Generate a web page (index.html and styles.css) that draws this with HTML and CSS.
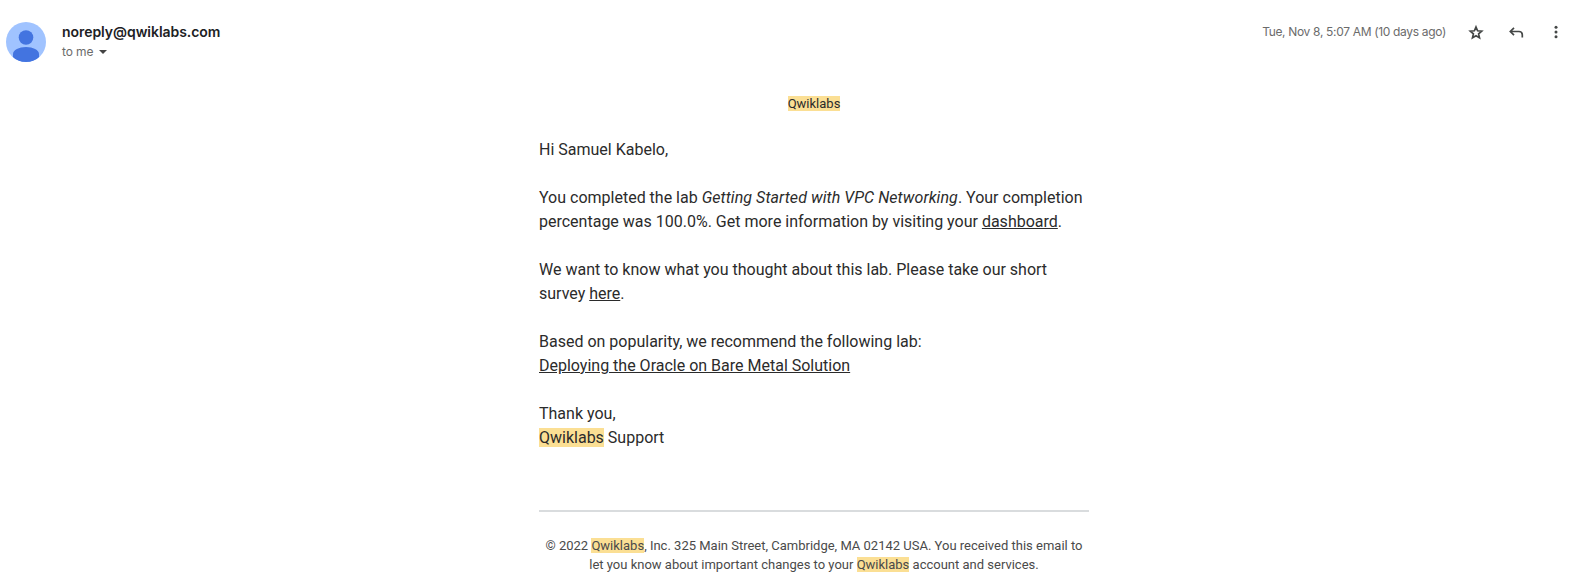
FILE: index.html
```html
<!DOCTYPE html>
<html lang="en">
<head>
<meta charset="utf-8">
<title>Qwiklabs</title>
<link rel="stylesheet" href="styles.css">
</head>
<body>
<header class="header">
  <svg class="avatar" viewBox="0 0 40 40"><defs><clipPath id="c"><circle cx="20" cy="20" r="20"/></clipPath></defs><circle cx="20" cy="20" r="20" fill="#a0c3ff"/><g clip-path="url(#c)" fill="#4374e0"><circle cx="20" cy="15.5" r="7.300"/><path d="M7 35.500V32c0-4 6-7 13-7s13 3 13 7v3.500c-3 3.500-8 5-13 5s-10-1.500-13-5z"/></g></svg>
  <div class="sender">
    <div class="address">noreply@qwiklabs.com</div>
    <div class="to">to me <span class="caret"></span></div>
  </div>
  <div class="meta">
    <span class="date">Tue, Nov 8, 5:07 AM (10 days ago)</span>
    <svg class="icon star" viewBox="0 0 20 20"><path d="M10 5l1.600 3.800 4.100.35-3.100 2.700.9 4-3.500-2.100-3.500 2.100.9-4-3.100-2.700 4.100-.35z"/></svg>
    <svg class="icon reply" viewBox="0 0 20 20"><path d="M8 5.800 4.300 9.500 8 13.200M4.300 9.500H13a3.300 3.300 0 0 1 3.300 3.300v2.700"/></svg>
    <svg class="icon more" viewBox="0 0 20 20"><circle cx="10" cy="5.200" r="1.500"/><circle cx="10" cy="10" r="1.500"/><circle cx="10" cy="14.800" r="1.500"/></svg>
  </div>
</header>
<main class="mail">
  <div class="brand"><mark>Qwiklabs</mark></div>
  <p>Hi Samuel Kabelo,</p>
  <p>You completed the lab <em>Getting Started with VPC Networking</em>. Your completion<br>percentage was 100.0%. Get more information by visiting your <a>dashboard</a>.</p>
  <p>We want to know what you thought about this lab. Please take our short<br>survey <a>here</a>.</p>
  <p>Based on popularity, we recommend the following lab:<br><a>Deploying the Oracle on Bare Metal Solution</a></p>
  <p>Thank you,<br><mark>Qwiklabs</mark> Support</p>
  <footer class="footer">© 2022 <mark>Qwiklabs</mark>, Inc. 325 Main Street, Cambridge, MA 02142 USA. You received this email to<br>let you know about important changes to your <mark>Qwiklabs</mark> account and services.</footer>
</main>
</body>
</html>
```
FILE: styles.css
```css
body { margin: 0; height: 585px; overflow: hidden; background: #fff; font-family: Roboto, sans-serif; color: #2b2b2b; }
.header { display: flex; height: 72px; padding: 22px 0 0 6px; box-sizing: border-box; }
.avatar { width: 40px; height: 40px; }
.sender { margin-left: 16px; }
.address { font: 600 14px/20px Inter, sans-serif; letter-spacing: -.05px; color: #202124; }
.to { display: flex; align-items: center; font: 12px/20px Inter, sans-serif; letter-spacing: -.1px; color: #6b6b6b; }
.caret { margin-left: 6px; border: 4.5px solid transparent; border-top-color: #444; border-bottom: 0; }
.meta { display: flex; align-items: center; height: 20px; margin-left: auto; }
.date { font: 12px/20px Inter, sans-serif; letter-spacing: -.33px; color: #6b6b6b; }
.icon { width: 20px; height: 20px; margin-left: 20px; fill: #444746; }
.star, .reply { fill: none; stroke: #444746; stroke-width: 1.7; }
.more { margin-right: 7px; }
.mail { width: 550px; margin-left: 539px; font-size: 16px; line-height: 24px; }
.brand { padding: 22px 0 1px; line-height: 19px; font-size: 13px; text-align: center; }
.mail p { margin: 24px 0 0; white-space: nowrap; }
em { letter-spacing: .06px; }
mark { background: #fbdf94; color: inherit; }
a { text-decoration: underline; }
.footer { margin-top: 60px; padding-top: 24px; border-top: 2px solid #d9dcde; font-size: 13px; line-height: 19px; text-align: center; white-space: nowrap; color: #4a4a4a; }
```
